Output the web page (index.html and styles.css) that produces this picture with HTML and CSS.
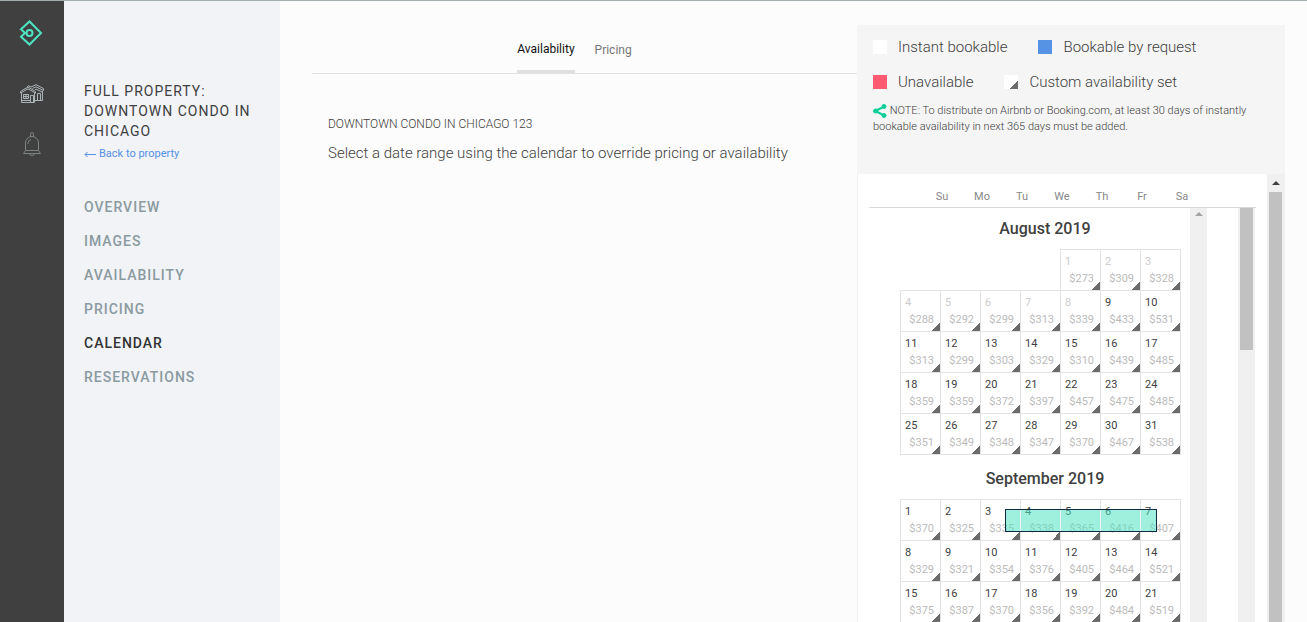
FILE: index.html
```
<!DOCTYPE html>
<html lang="en">
<head>
  <meta charset="UTF-8">
  <meta name="viewport" content="width=device-width, initial-scale=1.0">
  <title>Calendar - Downtown Condo in Chicago</title>
  <link rel="stylesheet" href="styles.css">
</head>
<body>
  <nav class="rail" aria-label="Main">
    <a class="rail-logo" href="#home" aria-label="Home">
      <svg width="24" height="28" viewBox="0 0 24 28" fill="none" stroke="#4fe3c1" stroke-width="2">
        <path d="M6 14L2 10.300L10.500 2.500L22 14L10.500 25.500L2 17.700L6 14"/>
        <path d="M5 14h3"/>
        <circle cx="10.500" cy="14" r="3"/>
      </svg>
    </a>
    <a class="rail-houses" href="#properties" aria-label="Properties">
      <svg width="24" height="20" viewBox="0 0 24 20" fill="none" stroke="#aab4b6" stroke-width="1">
        <path d="M0.500 7.500L8 3L15.500 7.500V9L8 4.800L0.500 9z"/>
        <path d="M7 2.800L8.500 1.800L11 3L16 0.700L23.500 4.500V6.500L16 2.800L12.500 4.500"/>
        <path d="M1.500 9V18.500H14.500V9M1.500 16.500H10M22.500 7V16.500H15M15 6L16 5L22 8"/>
        <path d="M3.500 10.500h5v4h-5zM6 10.500v4M3.500 12.500h5M10.500 18V11.500h3V18M17.500 16V9.500h3V16"/>
      </svg>
    </a>
    <a class="rail-bell" href="#notifications" aria-label="Notifications">
      <svg width="18" height="24" viewBox="0 0 18 24" fill="none" stroke="#7d8283" stroke-width="1">
        <path d="M7.500 5V2a1.500 1.500 0 0 1 3 0V5"/>
        <path d="M2.500 18.500V11a6.500 6.500 0 0 1 13 0V18.500L17.500 21.500H0.500z"/>
        <path d="M2.500 18.500h13M5 12V11a4 4 0 0 1 3-3.500M6.500 21.500a2.500 2 0 0 0 5 0"/>
      </svg>
    </a>
  </nav>

  <aside class="sidebar">
    <h1>Full property: Downtown Condo in Chicago</h1>
    <a class="back" href="#property"><svg width="12" height="6" viewBox="0 0 12 6" fill="none" stroke="currentColor"><path d="M12 3.500H1M3.500 1L1 3.500L3.500 6"/></svg>Back to property</a>
    <ul class="menu">
      <li><a href="#overview">Overview</a></li>
      <li><a href="#images">Images</a></li>
      <li><a href="#availability">Availability</a></li>
      <li><a href="#pricing">Pricing</a></li>
      <li><a class="active" href="#calendar">Calendar</a></li>
      <li><a href="#reservations">Reservations</a></li>
    </ul>
  </aside>

  <main class="content">
    <div class="tabs">
      <button type="button" class="tab active">Availability</button>
      <button type="button" class="tab">Pricing</button>
    </div>
    <div class="details">
      <h2>DOWNTOWN CONDO IN CHICAGO 123</h2>
      <p>Select a date range using the calendar to override pricing or availability</p>
    </div>
  </main>

  <section class="panel">
    <div class="legend">
      <ul class="legend-row">
        <li><span class="swatch instant"></span>Instant bookable</li>
        <li><span class="swatch request"></span>Bookable by request</li>
      </ul>
      <ul class="legend-row">
        <li><span class="swatch unavailable"></span>Unavailable</li>
        <li><span class="swatch custom"></span>Custom availability set</li>
      </ul>
      <p class="note">
        <svg width="14" height="14" viewBox="0 0 14 14" fill="#0acf97" stroke="#0acf97">
          <path d="M11 2.500L2.500 7L11 11.500" fill="none" stroke-width="2"/>
          <circle cx="11" cy="2.500" r="2"/><circle cx="2.500" cy="7" r="2"/><circle cx="11" cy="11.500" r="2"/>
        </svg>
        NOTE: To distribute on Airbnb or Booking.com, at least 30 days of instantly bookable availability in next 365 days must be added.
      </p>
    </div>

    <div class="scroller">
      <div class="calendar">
        <div class="weekdays">
          <span>Su</span><span>Mo</span><span>Tu</span><span>We</span><span>Th</span><span>Fr</span><span>Sa</span>
        </div>
        <div class="calendar-body">
          <div class="months" id="months"></div>
          <div class="scrollbar"><span class="arrow light"></span></div>
          <div class="scrollbar second"><span class="thumb short"></span></div>
        </div>
      </div>
      <div class="scrollbar outer"><span class="arrow"></span><span class="thumb"></span></div>
    </div>
  </section>

  <script src="calendar.js"></script>
</body>
</html>
```
FILE: styles.css
```
* {
  box-sizing: border-box;
}
body {
  display: flex;
  height: 100vh;
  margin: 0;
  overflow: hidden;
  border-top: 1px solid #a3adaf;
  background: #fcfcfc;
  color: #404040;
  font-family: Roboto, "Liberation Sans", sans-serif;
  font-size: 14px;
}
h1, h2, h3, p, ul {
  margin: 0;
  padding: 0;
}
ul {
  list-style: none;
}
a {
  text-decoration: none;
}
button {
  padding: 0;
  border: 0;
  background: none;
  color: inherit;
  font: inherit;
  cursor: pointer;
}
svg {
  display: block;
}

/* left rail */
.rail {
  flex: none;
  display: flex;
  flex-direction: column;
  align-items: center;
  width: 64px;
  padding-top: 18px;
  background: #404040;
}
.rail-logo {
  margin-right: 2px;
}
.rail-houses {
  margin-top: 37px;
}
.rail-bell {
  margin-top: 28px;
}

/* property menu */
.sidebar {
  flex: none;
  width: 216px;
  padding: 80px 20px 0;
  background: #f1f3f7;
}
.sidebar h1 {
  font-size: 14px;
  font-weight: 400;
  line-height: 20px;
  letter-spacing: 1px;
  text-transform: uppercase;
}
.back {
  display: flex;
  align-items: center;
  gap: 3px;
  margin-top: 5px;
  color: #5691e4;
  font-size: 11px;
  line-height: 16px;
}
.menu {
  margin-top: 28px;
}
.menu a {
  display: block;
  color: #8b9a9f;
  font-size: 14px;
  font-weight: 500;
  line-height: 34px;
  letter-spacing: 1px;
  text-transform: uppercase;
}
.menu a.active {
  color: #333;
}

/* middle column */
.content {
  flex: 1;
  min-width: 0;
  padding: 32px 0 0 32px;
}
.tabs {
  display: flex;
  justify-content: center;
  align-items: flex-start;
  gap: 20px;
  padding-right: 20px;
  border-bottom: 1px solid #e2e2e2;
}
.tab {
  height: 40px;
  padding-bottom: 6px;
  color: #777;
  font-size: 12px;
  line-height: 16px;
}
.tab.active {
  border-bottom: 3px solid #e2e0df;
  color: #111;
}
.details {
  padding: 40px 16px;
}
.details h2 {
  font-size: 12px;
  font-weight: 300;
  line-height: 20px;
}
.details p {
  margin-top: 9px;
  font-size: 15px;
  font-weight: 300;
  line-height: 20px;
}

/* calendar panel */
.panel {
  flex: none;
  display: flex;
  flex-direction: column;
  width: 428px;
  margin: 24px 22px 0 0;
  background: #f5f5f5;
}
.legend {
  padding: 10px 16px 39px;
}
.legend-row {
  display: flex;
  gap: 31px;
  margin-bottom: 11px;
}
.legend-row li {
  display: flex;
  align-items: center;
  gap: 11px;
  font-size: 15px;
  font-weight: 300;
  line-height: 24px;
}
.swatch {
  width: 14px;
  height: 14px;
  background: #fff;
}
.swatch.request {
  background: #5793e5;
}
.swatch.unavailable {
  background: #ff5a72;
}
.swatch.custom {
  background: linear-gradient(135deg, transparent 50%, #6b6b6b 50%) right bottom / 8px 8px no-repeat #fff;
}
.note {
  margin-top: -2px;
  font-size: 11px;
  font-weight: 300;
  line-height: 16px;
}
.note svg {
  display: inline-block;
  vertical-align: middle;
}
.scroller {
  flex: 1;
  display: flex;
  min-height: 0;
  border: solid #f1f1f1;
  border-width: 0 1px;
  background: #fff;
}
.calendar {
  flex: 1;
  display: flex;
  flex-direction: column;
  padding: 0 11px;
}
.weekdays {
  display: flex;
  padding: 15px 0 2px 53px;
  border-bottom: 1px solid #d8dada;
  color: #888;
  font-size: 11px;
  line-height: 16px;
}
.weekdays span {
  width: 40px;
  text-align: center;
}
.calendar-body {
  flex: 1;
  display: flex;
  min-height: 0;
}
.months {
  flex: 1;
  padding-left: 31px;
  overflow: hidden;
}
.month {
  position: relative;
}
.month h3 {
  padding: 9px 0;
  font-size: 16px;
  font-weight: 500;
  line-height: 23px;
  text-align: center;
}
.month + .month h3 {
  padding-top: 12px;
}
.month table {
  border-collapse: collapse;
}
.month td {
  width: 40px;
  height: 41px;
  padding: 0;
}
.month td.filled {
  border: 1px solid #e2e4e4;
}
.day {
  display: flex;
  flex-direction: column;
  justify-content: center;
  width: 39px;
  height: 40px;
  padding: 0 6px 1px 4px;
  background: linear-gradient(135deg, transparent 50%, #6b6b6b 50%) right bottom / 8px 8px no-repeat;
  font-size: 11px;
  line-height: 17px;
  text-align: left;
}
.day.past {
  color: #ccc;
}
.price {
  align-self: flex-end;
  color: #bbb;
}
.selection {
  position: absolute;
  top: 54px;
  left: 105px;
  width: 152px;
  height: 23px;
  border: 1px solid #102a43;
  background: linear-gradient(to right, rgba(80, 227, 194, 0.55) 39px, rgba(255, 255, 255, 0.4) 39px) -25px 0 / 40px 100%;
  pointer-events: none;
}

/* scroll tracks */
.scrollbar {
  display: flex;
  flex-direction: column;
  align-items: center;
  width: 17px;
  background: #f0f0f0;
}
.scrollbar.second {
  margin: 0 1px 0 31px;
}
.arrow {
  margin: 7px 0;
  border: solid transparent;
  border-width: 0 4px 4px;
  border-bottom-color: #404040;
}
.arrow.light {
  margin: 4px 0;
  border-bottom-color: #a3a3a3;
}
.thumb {
  flex: 1;
  width: 13px;
  background: #c1c1c1;
}
.thumb.short {
  flex: none;
  height: 142px;
}
```
FILE: calendar.js
```
const months = [
  {
    name: "August 2019",
    firstWeekday: 4,
    pastUntil: 8,
    prices: [
      273, 309, 328,
      288, 292, 299, 313, 339, 433, 531,
      313, 299, 303, 329, 310, 439, 485,
      359, 359, 372, 397, 457, 475, 485,
      351, 349, 348, 347, 370, 467, 538
    ]
  },
  {
    name: "September 2019",
    firstWeekday: 0,
    pastUntil: 0,
    dragging: true,
    prices: [
      370, 325, 335, 338, 365, 416, 407,
      329, 321, 354, 376, 405, 464, 521,
      375, 387, 370, 356, 392, 484, 519
    ]
  }
];

function dayCell(day, price, past) {
  return `<td class="filled"><button type="button" class="day${past ? " past" : ""}">
    <span>${day}</span><span class="price">$${price}</span></button></td>`;
}

function monthTable(month) {
  const cells = Array(month.firstWeekday).fill("<td></td>");
  month.prices.forEach((price, i) => {
    cells.push(dayCell(i + 1, price, i < month.pastUntil));
  });

  let rows = "";
  for (let i = 0; i < cells.length; i += 7) {
    rows += "<tr>" + cells.slice(i, i + 7).join("") + "</tr>";
  }
  return `<div class="month"><h3>${month.name}</h3><table>${rows}</table>
    ${month.dragging ? '<div class="selection"></div>' : ""}</div>`;
}

document.getElementById("months").innerHTML = months.map(monthTable).join("");
```
